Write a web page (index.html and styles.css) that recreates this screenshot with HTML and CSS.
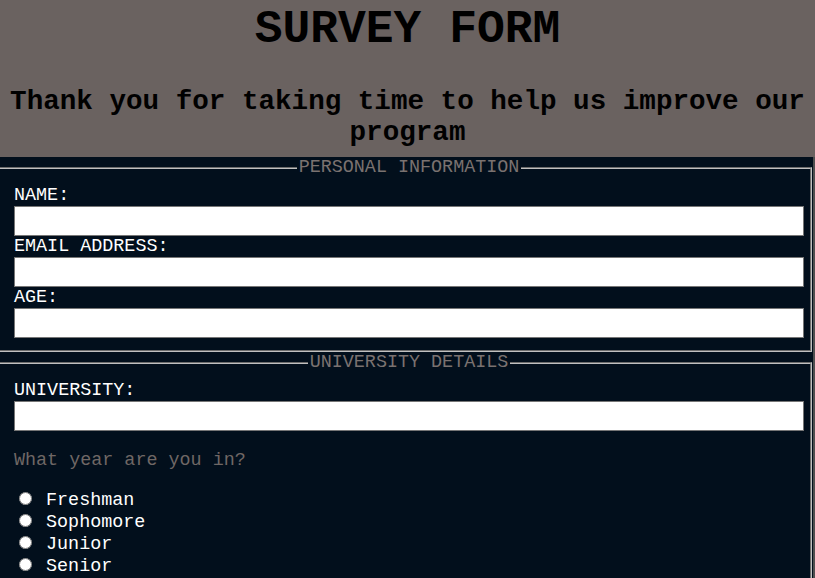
FILE: index.html
```html
<!DOCTYPE html>
<html lang="en">
<head>
<meta charset="utf-8">
<title>Survey Form</title>
<link rel="stylesheet" href="styles.css">
</head>
<body>
<header class="page-header">
  <h1 class="title">SURVEY FORM</h1>
  <h2 class="subtitle">Thank you for taking time to help us improve our program</h2>
</header>
<main class="survey">
  <form class="survey-form">
    <fieldset class="group">
      <legend class="group-legend">PERSONAL INFORMATION</legend>
      <label class="field-label" for="name">NAME:</label>
      <input class="text-input" type="text" id="name">
      <label class="field-label" for="email">EMAIL ADDRESS:</label>
      <input class="text-input" type="email" id="email">
      <label class="field-label" for="age">AGE:</label>
      <input class="text-input" type="number" id="age">
    </fieldset>
    <fieldset class="group">
      <legend class="group-legend">UNIVERSITY DETAILS</legend>
      <label class="field-label" for="uni">UNIVERSITY:</label>
      <input class="text-input" type="text" id="uni">
      <p class="question">What year are you in?</p>
      <label class="radio-row"><input class="radio" type="radio" name="year"> Freshman</label>
      <label class="radio-row"><input class="radio" type="radio" name="year"> Sophomore</label>
      <label class="radio-row"><input class="radio" type="radio" name="year"> Junior</label>
      <label class="radio-row"><input class="radio" type="radio" name="year"> Senior</label>
    </fieldset>
  </form>
</main>
</body>
</html>
```
FILE: styles.css
```css
html, body {
  margin: 0;
  padding: 0;
}

body {
  font-family: "Liberation Mono", "Courier New", monospace;
  background: #020f1c;
  overflow: hidden;
}

.page-header {
  background: #6a6260;
  padding: 4px 0 9px;
  text-align: center;
  color: #000;
}

.title {
  margin: 0;
  font-size: 46.3px;
  line-height: 52px;
  font-weight: bold;
}

.subtitle {
  margin: 30px 0 0;
  font-size: 27.6px;
  line-height: 31px;
  font-weight: bold;
}

.survey {
  background: #020f1c;
  border-right: 2px solid #4f4f4f;
}

.survey-form {
  margin: 0;
}

.group {
  margin: 0 1px 0 -2px;
  padding: 7px 6px 12px 14px;
  border: 2px groove #c0c0c0;
  min-inline-size: 0;
}

.group-legend {
  margin: 0 auto;
  padding: 0 2px;
  color: #7a7270;
  font-size: 18.4px;
  line-height: 21px;
}

.field-label {
  display: block;
  color: #fff;
  font-size: 18.4px;
  line-height: 21px;
}

.text-input {
  display: block;
  box-sizing: border-box;
  width: 100%;
  height: 30px;
  margin: 0;
  border: 1px solid #767676;
  background: #fff;
}

.question {
  margin: 19px 0;
  color: #6f6765;
  font-size: 18.4px;
  line-height: 21px;
}

.radio-row {
  display: block;
  height: 22px;
  color: #fff;
  font-size: 18.4px;
  line-height: 22px;
}

.radio {
  margin: 2px 3px 0 5px;
}
```
